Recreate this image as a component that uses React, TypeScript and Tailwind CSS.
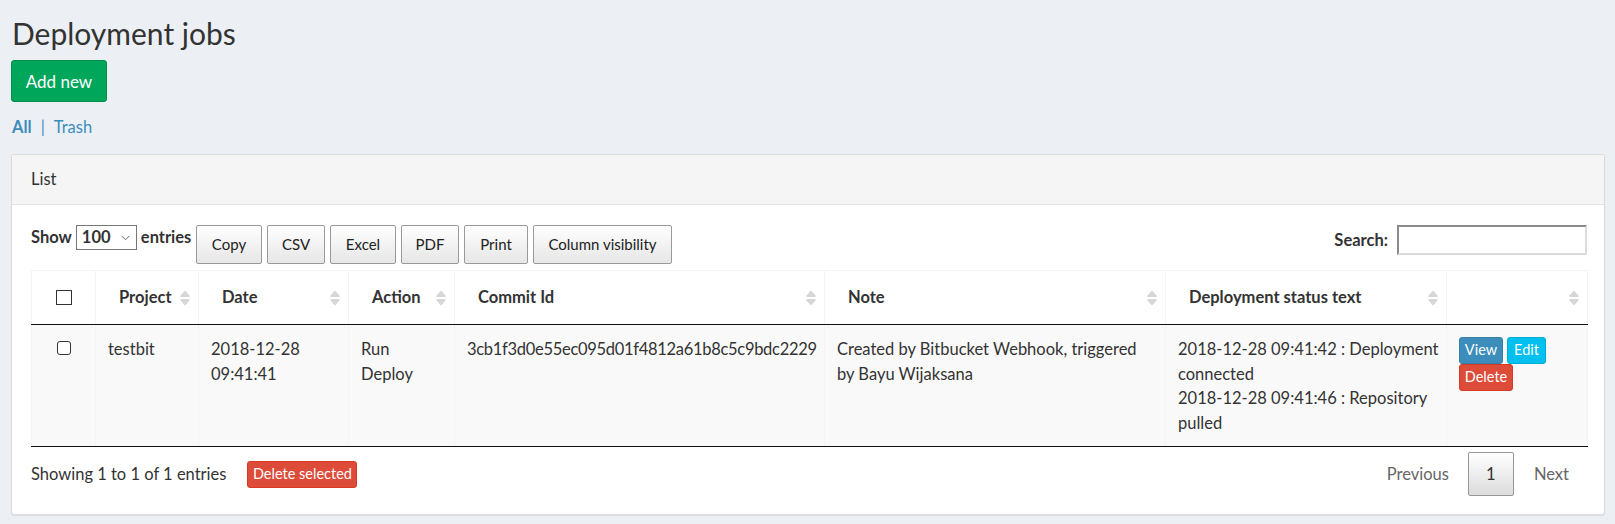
import React from 'react';

const cols = [64, 103, 150, 106, 370, 341, 281, 141];

function SortIcon() {
  return (
    <svg
      width="10"
      height="16"
      viewBox="0 0 10 16"
      className="absolute right-[8px] top-1/2 -translate-y-1/2"
    >
      <path d="M5 0.5 L9.5 5.5 V7 H0.5 V5.5 Z" fill="#d6d6d6" />
      <path d="M5 15.5 L9.5 10.5 V9 H0.5 V10.5 Z" fill="#d6d6d6" />
    </svg>
  );
}

function ToolButton({ label, w }: { label: string; w: string }) {
  return (
    <button
      className={`${w} h-[39px] rounded-[2px] border border-[#999] bg-gradient-to-b from-white to-[#e6e6e6] text-[15px] text-[#222] flex items-center justify-center`}
    >
      {label}
    </button>
  );
}

function Th({ children }: { children?: React.ReactNode }) {
  return (
    <th className="relative h-[54px] border-x border-t border-[#f4f4f4] border-b border-b-[#111] pl-[23px] pr-[28px] text-left font-bold align-middle">
      {children}
      <SortIcon />
    </th>
  );
}

export default function App() {
  return (
    <div className="min-h-screen bg-[#ecf0f5] font-['Lato',sans-serif] text-[16.5px] leading-[25px] text-[#333] pl-[11px] pr-[10px] pt-[17px] pb-[11px]">
      {/* Page header */}
      <h1 className="pl-[1px] text-[30px] leading-[33px] font-normal">Deployment jobs</h1>
      <button className="mt-[10px] h-[42px] w-[96px] rounded-[3px] border border-[#008d4c] bg-[#00a65a] text-[17px] text-white">
        Add new
      </button>
      <div className="mt-[13px] flex h-[25px] items-center pl-[1px] text-[#3c8dbc]">
        <span className="font-bold">All</span>
        <span className="mx-[9px]">|</span>
        <span>Trash</span>
      </div>

      {/* Card */}
      <div className="mt-[14px] rounded-[3px] border border-[#dadada] bg-white shadow-[0_1px_1px_rgba(0,0,0,0.08)]">
        <div className="flex h-[50px] items-center rounded-t-[3px] border-b border-[#e2e2e2] bg-[#f5f5f5] px-[19px]">
          List
        </div>

        <div className="pl-[19px] pr-[17px] pt-[20px] pb-[18px]">
          {/* Toolbar */}
          <div className="flex items-start justify-between">
            <div className="flex items-start">
              <div className="flex h-[25px] w-[165px] items-center font-bold">
                <span>Show</span>
                <div className="mx-[4px] flex h-[25px] w-[61px] items-center justify-between border border-[#767676] bg-white pl-[5px] pr-[6px]">
                  <span>100</span>
                  <svg width="9" height="6" viewBox="0 0 9 6">
                    <polyline points="0.5,0.8 4.5,4.8 8.5,0.8" fill="none" stroke="#666" strokeWidth="1" />
                  </svg>
                </div>
                <span>entries</span>
              </div>
              <div className="flex gap-[5px]">
                <ToolButton label="Copy" w="w-[66px]" />
                <ToolButton label="CSV" w="w-[58px]" />
                <ToolButton label="Excel" w="w-[66px]" />
                <ToolButton label="PDF" w="w-[58px]" />
                <ToolButton label="Print" w="w-[64px]" />
                <ToolButton label="Column visibility" w="w-[139px]" />
              </div>
            </div>
            <div className="flex items-center">
              <span className="font-bold">Search:</span>
              <input className="ml-[9px] h-[30px] w-[190px] border-2 border-t-[#8a8a8a] border-l-[#8a8a8a] border-b-[#dcdcdc] border-r-[#dcdcdc] bg-white outline-none" />
            </div>
          </div>

          {/* Table */}
          <table className="mt-[6px] w-full table-fixed border-collapse">
            <colgroup>
              {cols.map((w, i) => (
                <col key={i} style={{ width: w }} />
              ))}
            </colgroup>
            <thead>
              <tr>
                <th className="h-[54px] border-x border-t border-[#f4f4f4] border-b border-b-[#111] align-middle">
                  <div className="mx-auto h-[15px] w-[16px] border border-[#333]" />
                </th>
                <Th>Project</Th>
                <Th>Date</Th>
                <Th>Action</Th>
                <Th>Commit Id</Th>
                <Th>Note</Th>
                <Th>Deployment status text</Th>
                <Th />
              </tr>
            </thead>
            <tbody>
              <tr className="bg-[#f9f9f9] align-top [&>td]:border-x [&>td]:border-[#f4f4f4] [&>td]:border-b [&>td]:border-b-[#111] [&>td]:px-[12px] [&>td]:pt-[12px] [&>td]:pb-[11px] [&>td]:leading-[24.6px]">
                <td>
                  <div className="mx-auto mt-[4px] h-[14px] w-[14px] rounded-[3px] border border-[#333] bg-white" />
                </td>
                <td>testbit</td>
                <td>
                  <div className="whitespace-nowrap">2018-12-28</div>
                  <div className="whitespace-nowrap">09:41:41</div>
                </td>
                <td>
                  <div>Run</div>
                  <div>Deploy</div>
                </td>
                <td className="whitespace-nowrap tracking-[-0.3px]">3cb1f3d0e55ec095d01f4812a61b8c5c9bdc2229</td>
                <td>
                  <div className="whitespace-nowrap">Created by Bitbucket Webhook, triggered</div>
                  <div className="whitespace-nowrap">by Bayu Wijaksana</div>
                </td>
                <td>
                  <div className="whitespace-nowrap">2018-12-28 09:41:42 : Deployment</div>
                  <div className="whitespace-nowrap">connected</div>
                  <div className="whitespace-nowrap">2018-12-28 09:41:46 : Repository</div>
                  <div className="whitespace-nowrap">pulled</div>
                </td>
                <td>
                  <div className="flex gap-[4px]">
                    <button className="h-[27px] w-[44px] rounded-[3px] border border-[#367fa9] bg-[#3c8dbc] text-[14.5px] leading-none text-white">
                      View
                    </button>
                    <button className="h-[27px] w-[39px] rounded-[3px] border border-[#00acd6] bg-[#00c0ef] text-[14.5px] leading-none text-white">
                      Edit
                    </button>
                  </div>
                  <button className="block h-[27px] w-[54px] rounded-[3px] border border-[#d73925] bg-[#dd4b39] text-[14.5px] leading-none text-white">
                    Delete
                  </button>
                </td>
              </tr>
            </tbody>
          </table>

          {/* Footer */}
          <div className="mt-[5px] flex items-center justify-between">
            <div className="flex items-center">
              <span>Showing 1 to 1 of 1 entries</span>
              <button className="ml-[21px] h-[27px] w-[110px] rounded-[3px] border border-[#d73925] bg-[#dd4b39] text-[14.5px] leading-none text-white">
                Delete selected
              </button>
            </div>
            <div className="flex items-center text-[#666]">
              <span className="px-[17px]">Previous</span>
              <span className="ml-[2px] flex h-[44px] w-[46px] items-center justify-center rounded-[2px] border border-[#979797] bg-gradient-to-b from-white to-[#dcdcdc] text-[#333]">
                1
              </span>
              <span className="ml-[2px] px-[18px]">Next</span>
            </div>
          </div>
        </div>
      </div>
    </div>
  );
}
